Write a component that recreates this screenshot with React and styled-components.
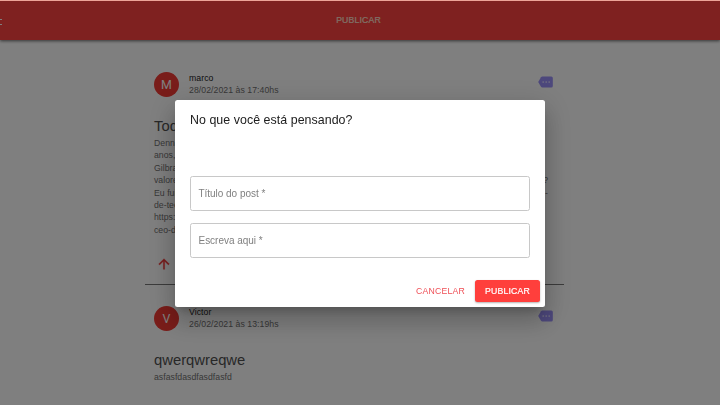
import React from "react";
import styled, { createGlobalStyle } from "styled-components";

const GlobalStyle = createGlobalStyle`
  * { box-sizing: border-box; }
  html, body { margin: 0; height: 100%; overflow: hidden; background: #fff; }
  body { font-family: "Liberation Sans", Arial, sans-serif; color: #222; }
  button { font-family: inherit; border: 0; cursor: pointer; }
`;

const Page = styled.div`
  height: 405px;
  overflow: hidden;
  background: #fff;
`;

const TopEdge = styled.div`
  position: fixed;
  inset: 0 0 auto 0;
  height: 1px;
  background: #eda498;
  z-index: 20;
`;

const AppBar = styled.header`
  height: 40px;
  padding-right: 3px;
  display: flex;
  align-items: center;
  justify-content: center;
  background: #ff4340;
  color: #ffe0d0;
  box-shadow: 0 1px 3px rgba(0, 0, 0, 0.6);
  font-size: 8.7px;
  letter-spacing: 0.16px;
  -webkit-text-stroke: 0.2px #ffe0d0;
`;

const MenuMark = styled.span`
  position: absolute;
  left: 0;
  top: 19px;
  width: 1.5px;
  height: 6px;
  border: solid #fff;
  border-width: 1px 0;
`;

const Feed = styled.main`
  width: 419px;
  margin-left: 145px;
  padding-top: 22px;
`;

const Post = styled.article`
  height: 223px;
  margin-bottom: 11px;
  padding: 9px 9px 0;
  border-bottom: 1px solid #777;
`;

const PostHeader = styled.div`
  display: flex;
  align-items: center;
  height: 26px;
`;

const Avatar = styled.div`
  width: 25px;
  height: 25px;
  border-radius: 50%;
  display: grid;
  place-items: center;
  background: #f23a34;
  color: #fff;
  font-family: Roboto, sans-serif;
  font-size: 12.4px;
`;

const Meta = styled.div`
  margin-left: 10px;
  flex: 1;
  font-size: 8.7px;
  line-height: 12.4px;
  letter-spacing: 0.06px;
`;

const Author = styled.div`
  color: #222;
`;

const PostDate = styled.div`
  color: #707070;
`;

const PostTitle = styled.h2`
  margin: 19px 0 0;
  padding-bottom: 1px;
  font-size: 14.8px;
  line-height: 20px;
  font-weight: 400;
  color: #505050;
`;

const PostBody = styled.div`
  font-size: 8.7px;
  line-height: 12.4px;
  letter-spacing: 0.03px;
  color: #707070;
`;

const Line = styled.div`
  display: flex;
  justify-content: space-between;
  height: 12.4px;
  padding-right: ${(p) => p.$inset || 0}px;
`;

const PostActions = styled.div`
  display: flex;
  padding: 20px 0 0 1.5px;
`;

const Overlay = styled.div`
  position: fixed;
  inset: 0;
  z-index: 10;
  display: flex;
  align-items: center;
  justify-content: center;
  padding-top: 2px;
  background: rgba(0, 0, 0, 0.5);
`;

const Dialog = styled.form`
  width: 370px;
  height: 207px;
  display: flex;
  flex-direction: column;
  border-radius: 2.5px;
  background: #fff;
  box-shadow: 0 7px 9px -4px rgba(0, 0, 0, 0.2),
    0 15px 24px 2px rgba(0, 0, 0, 0.14), 0 6px 28px 5px rgba(0, 0, 0, 0.12);
`;

const DialogTitle = styled.h1`
  margin: 0;
  padding: 10px 15px;
  height: 76px;
  font-size: 12.4px;
  line-height: 20px;
  font-weight: 400;
  letter-spacing: 0.05px;
  color: #202020;
`;

const Fields = styled.div`
  display: grid;
  gap: 12px;
  padding: 0 15px;
`;

const Field = styled.label`
  height: 35px;
  padding: 0 7.5px;
  display: flex;
  align-items: center;
  border: 1px solid #c8c8c8;
  border-radius: 2.5px;
  color: #808080;
  font-size: 10px;
  letter-spacing: -0.03px;
`;

const DialogActions = styled.div`
  margin-top: auto;
  padding: 0 5px 5px 0;
  display: flex;
  justify-content: flex-end;
  gap: 5px;
`;

const Button = styled.button`
  height: 22px;
  padding: 0;
  width: ${(p) => (p.$filled ? 65 : 59)}px;
  border-radius: 2.5px;
  font-size: 8.7px;
  letter-spacing: 0.22px;
  color: ${(p) => (p.$filled ? "#fff" : "#ef5057")};
  background: ${(p) => (p.$filled ? "#ff3f3c" : "transparent")};
  box-shadow: ${(p) => (p.$filled ? "0 1px 2px rgba(0,0,0,.3)" : "none")};
  -webkit-text-stroke: ${(p) => (p.$filled ? "0.2px #fff" : "0")};
`;

const MoreTag = () => (
  <svg width="15" height="12" viewBox="0 0 15 12">
    <path d="M4.3.5h9A1.5 1.5 0 0 1 14.8 2v8a1.5 1.5 0 0 1-1.5 1.5h-9a1.6 1.6 0 0 1-1.3-.7L.2 6 3 1.2A1.6 1.6 0 0 1 4.3.5z" fill="#9b90f8" />
    <circle cx="5.2" cy="6" r="0.85" fill="#e4e0ff" />
    <circle cx="8.2" cy="6" r="0.85" fill="#e4e0ff" />
    <circle cx="11.2" cy="6" r="0.85" fill="#e4e0ff" />
  </svg>
);

const TagSlot = styled.div`
  display: flex;
  margin-right: 2px;
  padding-bottom: 4px;
`;

const ArrowUp = () => (
  <svg width="16" height="16" viewBox="0 0 24 24" fill="#f03636" stroke="#f03636" strokeWidth="0.5">
    <path d="M4 12l1.41 1.41L11 7.83V20h2V7.83l5.58 5.59L20 12l-8-8-8 8z" />
  </svg>
);

const lines = [
  ["Dennis"],
  ["anos, e"],
  ["Gilbran"],
  ["valores", "?", 7],
  ["Eu fui a", "-", 7],
  ["de-tecn"],
  ["https://"],
  ["ceo-da"],
];

function PostHead({ initial, author, date }) {
  return (
    <PostHeader>
      <Avatar>{initial}</Avatar>
      <Meta>
        <Author>{author}</Author>
        <PostDate>{date}</PostDate>
      </Meta>
      <TagSlot><MoreTag /></TagSlot>
    </PostHeader>
  );
}

export default function App() {
  return (
    <>
      <GlobalStyle />
      <TopEdge />
      <Page>
        <AppBar><MenuMark />PUBLICAR</AppBar>
        <Feed>
          <Post>
            <PostHead initial="M" author="marco" date="28/02/2021 às 17:40hs" />
            <PostTitle>Todos</PostTitle>
            <PostBody>
              {lines.map(([start, end, inset]) => (
                <Line key={start} $inset={inset}><span>{start}</span><span>{end}</span></Line>
              ))}
            </PostBody>
            <PostActions><ArrowUp /></PostActions>
          </Post>
          <Post>
            <PostHead initial="V" author="Victor" date="26/02/2021 às 13:19hs" />
            <PostTitle>qwerqwreqwe</PostTitle>
            <PostBody>asfasfdasdfasdfasfd</PostBody>
          </Post>
        </Feed>
      </Page>
      <Overlay>
        <Dialog onSubmit={(e) => e.preventDefault()}>
          <DialogTitle>No que você está pensando?</DialogTitle>
          <Fields>
            <Field>Título do post *</Field>
            <Field>Escreva aqui *</Field>
          </Fields>
          <DialogActions>
            <Button type="button">CANCELAR</Button>
            <Button $filled>PUBLICAR</Button>
          </DialogActions>
        </Dialog>
      </Overlay>
    </>
  );
}
